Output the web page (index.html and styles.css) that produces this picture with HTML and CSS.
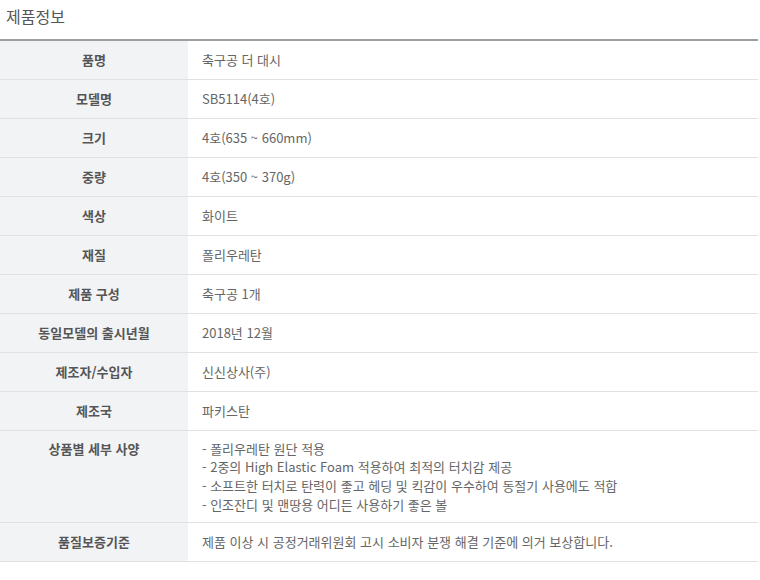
FILE: index.html
```html
<!DOCTYPE html>
<html lang="ko">
<head>
<meta charset="utf-8">
<link rel="stylesheet" href="styles.css">
</head>
<body>
<div class="wrap">
  <h2 class="title">제품정보</h2>
  <table class="info">
    <tbody>
      <tr><th>품명</th><td>축구공 더 대시</td></tr>
      <tr><th>모델명</th><td>SB5114(4호)</td></tr>
      <tr><th>크기</th><td>4호(635 ~ 660mm)</td></tr>
      <tr><th>중량</th><td>4호(350 ~ 370g)</td></tr>
      <tr><th>색상</th><td>화이트</td></tr>
      <tr><th>재질</th><td>폴리우레탄</td></tr>
      <tr><th>제품 구성</th><td>축구공 1개</td></tr>
      <tr><th>동일모델의 출시년월</th><td>2018년 12월</td></tr>
      <tr><th>제조자/수입자</th><td>신신상사(주)</td></tr>
      <tr><th>제조국</th><td>파키스탄</td></tr>
      <tr class="tall"><th>상품별 세부 사양</th><td>
        <div class="line">- 폴리우레탄 원단 적용</div>
        <div class="line">- 2중의 High Elastic Foam 적용하여 최적의 터치감 제공</div>
        <div class="line">- 소프트한 터치로 탄력이 좋고 헤딩 및 킥감이 우수하여 동절기 사용에도 적합</div>
        <div class="line">- 인조잔디 및 맨땅용 어디든 사용하기 좋은 볼</div>
      </td></tr>
      <tr><th>품질보증기준</th><td>제품 이상 시 공정거래위원회 고시 소비자 분쟁 해결 기준에 의거 보상합니다.</td></tr>
    </tbody>
  </table>
</div>
</body>
</html>
```

FILE: styles.css
```css
html, body {
  margin: 0;
  padding: 0;
  background: #ffffff;
}
body {
  font-family: "Noto Sans CJK KR", "Noto Sans", sans-serif;
  color: #666666;
}
.wrap {
  width: 758px;
}
.title {
  margin: 0;
  height: 39px;
  padding: 5px 0 0 6px;
  box-sizing: border-box;
  font-size: 16px;
  font-weight: normal;
  line-height: 22px;
  color: #555555;
}
.info {
  width: 758px;
  border-collapse: collapse;
  border-top: 2px solid #9b9fa2;
  font-size: 13px;
}
.info th, .info td {
  height: 39px;
  padding: 0;
  border-bottom: 1px solid #e1e1e1;
  box-sizing: border-box;
  line-height: 18px;
}
.info th {
  width: 188px;
  background: #f2f3f5;
  color: #555555;
  font-weight: bold;
  text-align: center;
}
.info td {
  padding-left: 14px;
  text-align: left;
  color: #666666;
}
.info tr.tall th {
  vertical-align: top;
  padding-top: 9px;
}
.info tr.tall td {
  height: 92px;
  vertical-align: top;
  padding-top: 9px;
}
.line {
  height: 18.7px;
  line-height: 18.7px;
}
```
